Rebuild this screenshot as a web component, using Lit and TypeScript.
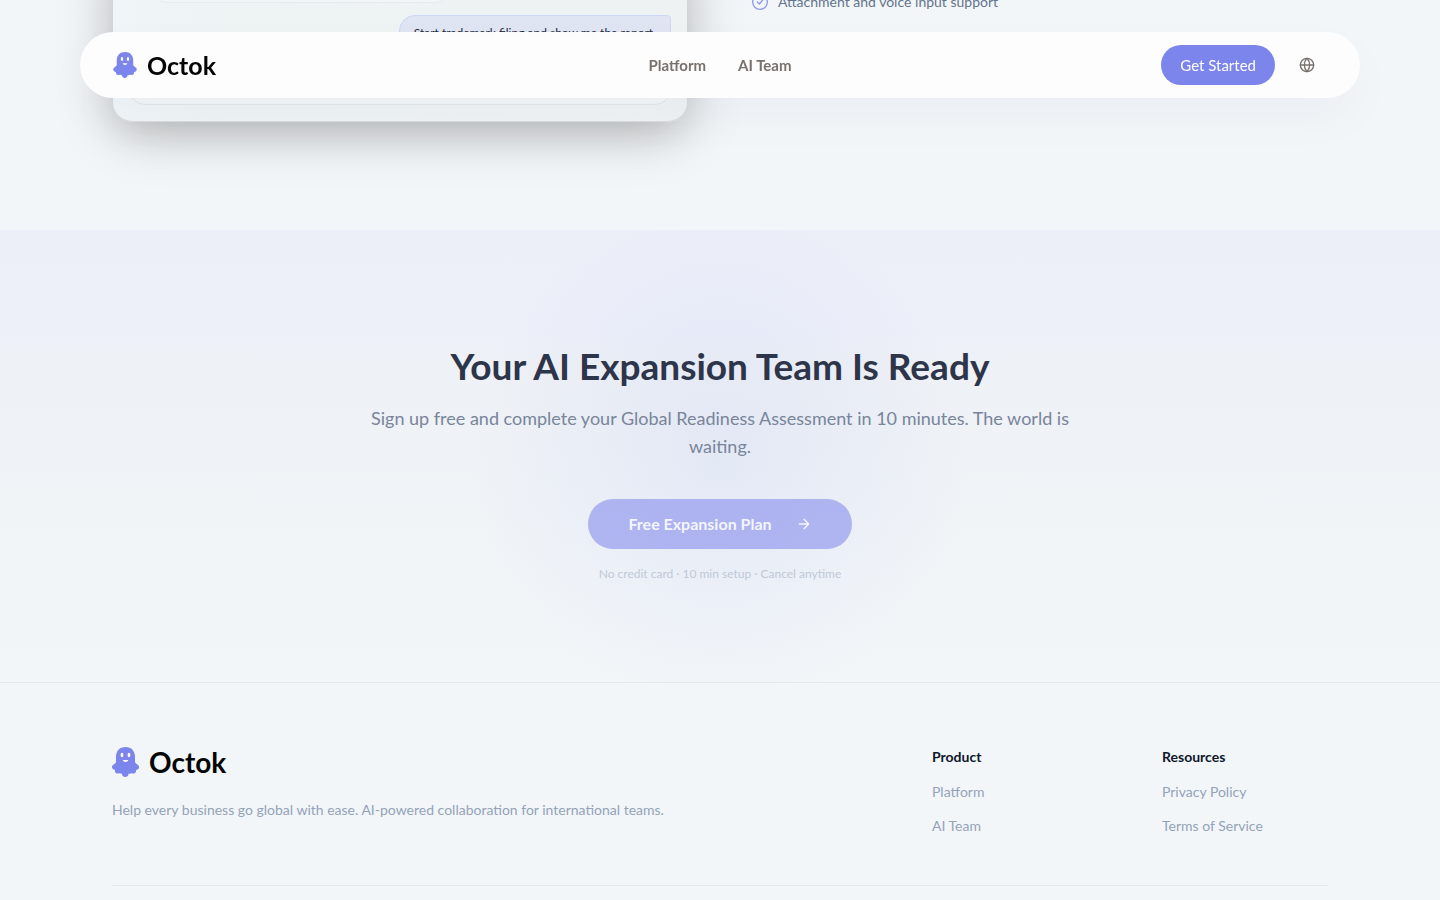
import { LitElement, html, css, svg } from "lit";
import { customElement, property } from "lit/decorators.js";

@customElement("octok-logo")
class OctokLogo extends LitElement {
  @property({ reflect: true }) size = "small";

  static styles = css`
    :host {
      display: flex;
      align-items: center;
      gap: 10px;
      font-family: Lato, "Liberation Sans", sans-serif;
      font-size: 25px;
      line-height: 26px;
      font-weight: 700;
      color: #050505;
    }
    :host([size="large"]) {
      font-size: 28px;
      line-height: 30px;
    }
    .mark {
      display: block;
      width: 24px;
      height: 26px;
    }
    :host([size="large"]) .mark {
      width: 27px;
      height: 30px;
    }
  `;

  render() {
    return html`
      <svg class="mark" viewBox="0 0 54 60" aria-hidden="true">
        <path
          fill="#7b85eb"
          d="M27 0C15 0 8 8 8 20v9c0 3-2 4-5 6-5 3-4 10 3 11-1 6 4 9 10 6 1 2 3 2 4 1-1 9 14 9 13 0 2 1 4 1 5-1 6 3 11 0 10-6 7-1 8-8 3-11-3-2-5-3-5-6v-9C46 8 39 0 27 0Z"
        />
        <ellipse cx="20" cy="16" rx="2.800" ry="4.600" fill="#fff" />
        <ellipse cx="34" cy="16" rx="2.800" ry="4.600" fill="#fff" />
        <path d="M21.500 26h11c-1 5-10 5-11 0Z" fill="#fff" />
      </svg>
      <span>Octok</span>
    `;
  }
}

const globe = svg`<circle cx="12" cy="12" r="10" /><path d="M12 2a14.500 14.500 0 0 0 0 20 14.500 14.500 0 0 0 0-20" /><path d="M2 12h20" />`;

@customElement("app-root")
class AppRoot extends LitElement {
  static styles = css`
    :host {
      display: block;
      height: 100vh;
      overflow: hidden;
      background: #f2f6f9;
      color: #1e293b;
      font-family: Lato, "Liberation Sans", sans-serif;
      font-size: 14px;
      line-height: 22px;
    }
    * {
      box-sizing: border-box;
    }
    h2,
    h3,
    p,
    ul {
      margin: 0;
      padding: 0;
    }
    ul {
      list-style: none;
    }
    a {
      color: inherit;
      text-decoration: none;
    }
    button {
      font: inherit;
      border: 0;
      cursor: pointer;
    }
    .icon {
      display: block;
      width: 16px;
      height: 16px;
      fill: none;
      stroke: currentColor;
      stroke-width: 2;
      stroke-linecap: round;
      stroke-linejoin: round;
    }

    .topbar {
      position: fixed;
      z-index: 5;
      top: 32px;
      left: 80px;
      right: 80px;
      display: grid;
      grid-template-columns: 1fr auto 1fr;
      align-items: center;
      padding: 13px 33px;
      border-radius: 40px;
      background: rgba(253, 253, 254, 0.98);
      backdrop-filter: blur(24px);
      box-shadow: 0 20px 50px rgba(30, 41, 59, 0.03);
    }
    .links {
      display: flex;
      gap: 32px;
      color: #78716c;
      font-size: 15px;
      font-weight: 700;
    }
    .actions {
      display: flex;
      justify-content: flex-end;
      gap: 12px;
    }
    .start {
      height: 40px;
      padding: 0 19px;
      border-radius: 20px;
      background: #7b85eb;
      color: #fff;
      font-size: 15px;
    }
    .lang {
      display: grid;
      place-items: center;
      width: 40px;
      height: 40px;
      padding: 0;
      border-radius: 20px;
      background: none;
      color: #78716c;
    }

    .wrap {
      max-width: 1216px;
      margin: 0 auto;
    }
    .preview {
      display: flex;
      flex-direction: column;
      justify-content: flex-end;
      height: 230px;
      padding: 0 112px 108px;
      overflow: hidden;
    }
    .preview .wrap {
      display: grid;
      grid-template-columns: 1fr 1fr;
      gap: 64px;
      align-items: end;
      width: 100%;
    }
    .chat {
      display: flex;
      flex-direction: column;
      gap: 12px;
      margin: 0 1px;
      padding: 16px;
      border-bottom: 1px solid #d9dddf;
      border-radius: 0 0 20px 20px;
      background: linear-gradient(90deg, #eff5f8, #eef3f4 20%, #eef2f3);
      box-shadow:
        0 16px 40px -8px rgba(41, 37, 30, 0.18),
        0 8px 60px rgba(41, 37, 30, 0.2);
    }
    .bubble {
      align-self: flex-start;
      width: 300px;
      height: 40px;
      margin-left: 22px;
      border: 1px solid #e5eaec;
      border-radius: 16px;
      background: #f2f6f8;
    }
    .bubble.mine {
      align-self: flex-end;
      width: auto;
      height: auto;
      margin-left: 0;
      padding: 8px 14px;
      border-color: #cdd6f4;
      border-radius: 16px 4px 16px 16px;
      background: #e0e5f4;
      font-size: 12px;
      line-height: 18px;
    }
    .prompt {
      width: 100%;
      height: 42px;
      padding: 0 12px;
      border: 1px solid #e2e7ea;
      border-radius: 16px;
      background: #f2f6f8;
    }
    .points {
      padding-bottom: 109px;
      color: #64748b;
    }
    .points li {
      display: flex;
      align-items: center;
      gap: 10px;
    }
    .points .icon {
      color: #8f98ee;
    }

    .cta {
      display: flex;
      flex-direction: column;
      align-items: center;
      padding: 112px 24px 100px;
      text-align: center;
      background:
        radial-gradient(circle 250px at 50% 50%, rgba(123, 143, 240, 0.1), rgba(123, 143, 240, 0)),
        linear-gradient(#eceff8, #edf0f9 22%, #eef1f5 30%, #f2f6f9);
    }
    .cta h2 {
      color: #2d354a;
      font-size: 37px;
      line-height: 48px;
      font-weight: 700;
    }
    .lead {
      max-width: 712px;
      margin-top: 14px;
      color: #78859a;
      font-size: 18px;
      line-height: 28px;
    }
    .plan {
      display: flex;
      align-items: center;
      gap: 24px;
      height: 50px;
      margin-top: 39px;
      padding: 0 40px;
      border-radius: 25px;
      background: rgba(123, 133, 235, 0.55);
      color: rgba(255, 255, 255, 0.88);
      font-size: 16px;
      font-weight: 700;
    }
    .note {
      margin-top: 17px;
      color: #bfc9d7;
      font-size: 12px;
      line-height: 16px;
    }

    .footer {
      padding: 64px 112px;
      border-top: 1px solid #e2e8ec;
      color: #94a3b8;
    }
    .columns {
      display: grid;
      grid-template-columns: 1fr 166px 166px;
      gap: 64px;
      padding-bottom: 48px;
      border-bottom: 1px solid #e2e8ec;
    }
    .about {
      margin-top: 22px;
    }
    .columns h3 {
      margin-bottom: 14px;
      color: #0f172a;
      font-size: 14px;
      line-height: 20px;
      font-weight: 700;
    }
    .columns ul {
      display: grid;
      gap: 12px;
    }
  `;

  private column(title: string, items: string[]) {
    return html`
      <nav aria-label=${title}>
        <h3>${title}</h3>
        <ul>
          ${items.map((item) => html`<li><a href="#">${item}</a></li>`)}
        </ul>
      </nav>
    `;
  }

  render() {
    return html`
      <header class="topbar">
        <a href="#"><octok-logo></octok-logo></a>
        <nav class="links">
          <a href="#">Platform</a>
          <a href="#">AI Team</a>
        </nav>
        <div class="actions">
          <button class="start">Get Started</button>
          <button class="lang" aria-label="Language">
            <svg class="icon" viewBox="0 0 24 24">${globe}</svg>
          </button>
        </div>
      </header>

      <main>
        <section class="preview">
          <div class="wrap">
            <div class="chat">
              <div class="bubble"></div>
              <p class="bubble mine">Start trademark filing and show me the report.</p>
              <input class="prompt" aria-label="Message" />
            </div>
            <ul class="points">
              <li>
                <svg class="icon" viewBox="0 0 24 24">
                  <circle cx="12" cy="12" r="11" />
                  <path d="m8 12 3 3 5-6" />
                </svg>
                Attachment and voice input support
              </li>
            </ul>
          </div>
        </section>

        <section class="cta">
          <h2>Your AI Expansion Team Is Ready</h2>
          <p class="lead">
            Sign up free and complete your Global Readiness Assessment in 10 minutes. The world is
            waiting.
          </p>
          <button class="plan">
            Free Expansion Plan
            <svg class="icon" viewBox="0 0 24 24"><path d="M5 12h14M12 5l7 7-7 7" /></svg>
          </button>
          <p class="note">No credit card · 10 min setup · Cancel anytime</p>
        </section>
      </main>

      <footer class="footer">
        <div class="wrap columns">
          <div>
            <a href="#"><octok-logo size="large"></octok-logo></a>
            <p class="about">
              Help every business go global with ease. AI-powered collaboration for international
              teams.
            </p>
          </div>
          ${this.column("Product", ["Platform", "AI Team"])}
          ${this.column("Resources", ["Privacy Policy", "Terms of Service"])}
        </div>
      </footer>
    `;
  }
}
